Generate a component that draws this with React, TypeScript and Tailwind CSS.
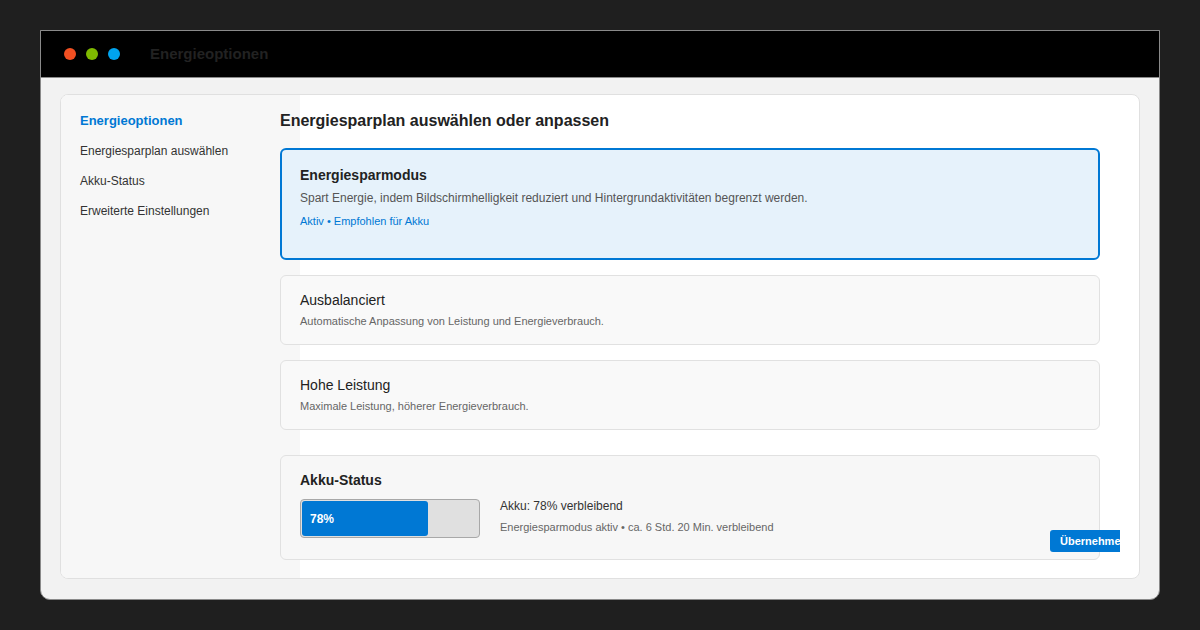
import React from "react";

export default function App() {
  return (
    <div
      className="w-[1200px] h-[630px] bg-[#1f1f1f] pt-[30px] px-[40px]"
      style={{ fontFamily: '"Liberation Sans", Arial, Helvetica, sans-serif' }}
    >
      <div className="h-[570px] border border-[#8a8a8a] rounded-b-[10px] bg-[#f2f2f2] overflow-hidden flex flex-col">
        {/* Title bar */}
        <div className="h-[47px] shrink-0 bg-black border-b border-[#8a8a8a] flex items-center pl-[23px]">
          <div className="flex items-center gap-[10px]">
            <span className="w-[12px] h-[12px] rounded-full bg-[#f25022]" />
            <span className="w-[12px] h-[12px] rounded-full bg-[#7fba00]" />
            <span className="w-[12px] h-[12px] rounded-full bg-[#00a4ef]" />
          </div>
          <div className="ml-[30px] text-[15px] font-bold text-[#222222]">Energieoptionen</div>
        </div>

        {/* Body */}
        <div className="flex-1 px-[19px] pt-[16px] pb-[19px]">
          <div className="h-[485px] border border-[#e0e0e0] rounded-lg bg-white flex overflow-hidden">
            {/* Sidebar */}
            <div className="w-[239px] shrink-0 bg-[#f7f7f7] pl-[19px] pt-[11px] flex flex-col">
              <div className="h-[30px] flex items-center text-[13px] font-bold text-[#0078d4]">Energieoptionen</div>
              <div className="h-[30px] flex items-center text-[12px] text-[#333333]">Energiesparplan auswählen</div>
              <div className="h-[30px] flex items-center text-[12px] text-[#333333]">Akku-Status</div>
              <div className="h-[30px] flex items-center text-[12px] text-[#333333]">Erweiterte Einstellungen</div>
            </div>

            {/* Main */}
            <div className="flex-1 -ml-5 mr-[19px] relative overflow-hidden pt-[16px]">
              <h1 className="h-[20px] leading-[20px] text-[16px] font-bold text-[#222222]">
                Energiesparplan auswählen oder anpassen
              </h1>

              <div className="mt-[17px] w-[820px] flex flex-col">
                {/* Selected card */}
                <div className="h-[112px] rounded-md border-2 border-[#0078d4] bg-[#e6f2fb] pl-[18px] pt-[16px]">
                  <div className="text-[14px] leading-[18px] font-bold text-[#222222]">Energiesparmodus</div>
                  <div className="mt-[6px] text-[12px] leading-[16px] text-[#555555]">
                    Spart Energie, indem Bildschirmhelligkeit reduziert und Hintergrundaktivitäten begrenzt werden.
                  </div>
                  <div className="mt-[8px] text-[11px] leading-[14px] text-[#0078d4]">Aktiv • Empfohlen für Akku</div>
                </div>

                <div className="mt-[15px] h-[70px] rounded-md border border-[#e1e1e1] bg-[#f9f9f9] pl-[19px] pt-[15px]">
                  <div className="text-[14px] leading-[18px] text-[#222222]">Ausbalanciert</div>
                  <div className="mt-[5px] text-[11px] leading-[14px] text-[#666666]">
                    Automatische Anpassung von Leistung und Energieverbrauch.
                  </div>
                </div>

                <div className="mt-[15px] h-[70px] rounded-md border border-[#e1e1e1] bg-[#f9f9f9] pl-[19px] pt-[15px]">
                  <div className="text-[14px] leading-[18px] text-[#222222]">Hohe Leistung</div>
                  <div className="mt-[5px] text-[11px] leading-[14px] text-[#666666]">
                    Maximale Leistung, höherer Energieverbrauch.
                  </div>
                </div>

                {/* Akku card */}
                <div className="relative mt-[25px] h-[105px] rounded-md border border-[#e1e1e1] bg-[#f7f7f7] pl-[19px] pt-[15px]">
                  <div className="text-[14px] leading-[18px] font-bold text-[#222222]">Akku-Status</div>
                  <div className="mt-[10px] flex items-start">
                    <div className="w-[180px] h-[39px] rounded-[4px] border border-[#a8a8a8] bg-[#e0e0e0] p-px">
                      <div className="h-full w-[126px] rounded-[3px] bg-[#0078d4] flex items-center pl-[8px] text-[12px] font-bold text-white">
                        78%
                      </div>
                    </div>
                    <div className="ml-[20px] -mt-px flex flex-col">
                      <div className="text-[12px] leading-[16px] text-[#333333]">Akku: 78% verbleibend</div>
                      <div className="mt-[6px] text-[11px] leading-[14px] text-[#666666]">
                        Energiesparmodus aktiv • ca. 6 Std. 20 Min. verbleibend
                      </div>
                    </div>
                  </div>
                  <button className="absolute left-[769px] top-[74px] h-[22px] px-[10px] rounded-[3px] bg-[#0078d4] text-white text-[11px] font-bold whitespace-nowrap">
                    Übernehmen
                  </button>
                </div>
              </div>
            </div>
          </div>
        </div>
      </div>
    </div>
  );
}
